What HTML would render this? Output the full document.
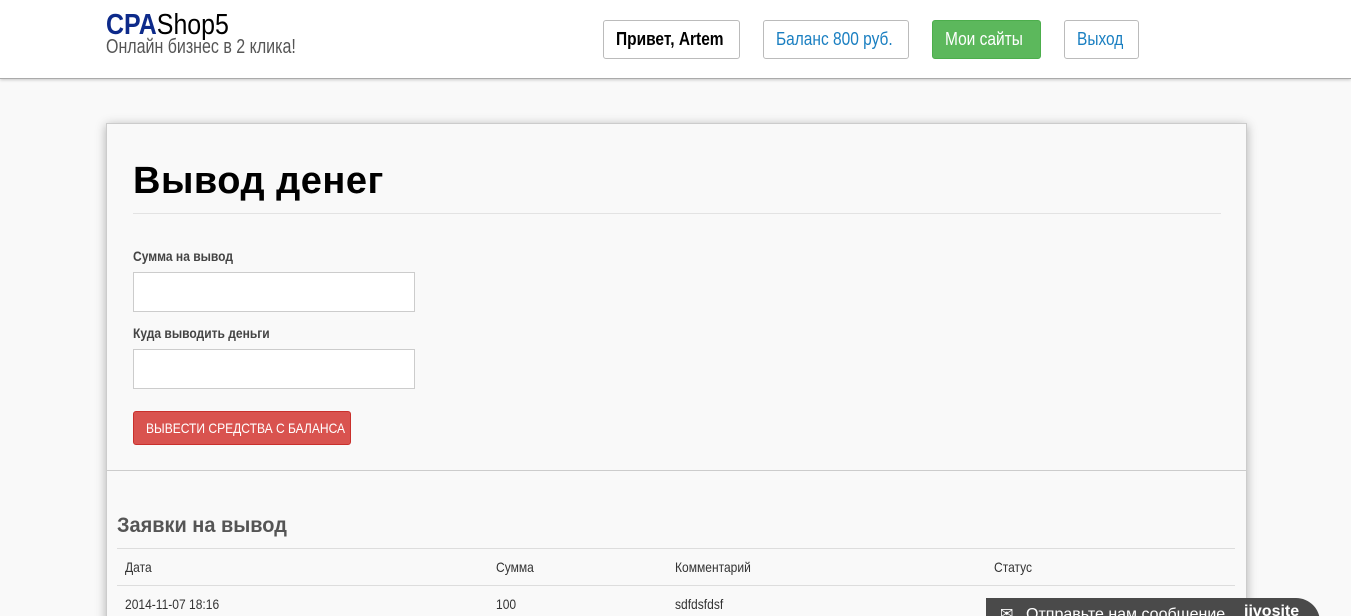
<!DOCTYPE html>
<html><head><meta charset="utf-8"><style>
html,body{margin:0;width:1351px;height:616px;overflow:hidden}
body{background:#f9f9f9;font-family:"Liberation Sans",sans-serif;position:relative}
.c{display:inline-block;transform:scaleX(.86);transform-origin:0 0;white-space:nowrap}
.hdr{position:absolute;left:0;top:0;width:1351px;height:78px;background:#fff;border-bottom:1px solid #aaa;box-shadow:0 1px 3px rgba(0,0,0,.2)}
.logo{position:absolute;left:106px;top:10px;font-size:29px;line-height:30px}
.logo b{color:#0d2a8a}
.sub{position:absolute;left:106px;top:36px;font-size:20px;color:#555}
.btn{position:absolute;top:20px;height:39px;border:1px solid #bbb;border-radius:3px;background:#fff;font-size:18px;line-height:37px;box-sizing:border-box;overflow:hidden}
.btn .c{position:absolute;left:12px;top:0}
.card{position:absolute;left:106px;top:123px;width:1139px;height:520px;background:#f9f9f9;border:1px solid #ccc;box-shadow:0 2px 10px rgba(0,0,0,.3)}
h1{position:absolute;left:26px;top:36px;margin:0;font-weight:bold;font-size:38px;color:#000;letter-spacing:.5px}
.hr{position:absolute;left:26px;right:25px;top:89px;border-top:1px solid #e3e3e3}
.lbl{position:absolute;left:26px;font-size:14px;font-weight:bold;color:#444}
.inp{position:absolute;left:26px;width:282px;height:40px;border:1px solid #ccc;background:#fff;box-sizing:border-box}
.red{position:absolute;left:26px;top:287px;width:218px;height:34px;background:#d9534f;border:1px solid #c9302c;border-radius:3px;color:#fff;font-size:14px;line-height:32px;box-sizing:border-box}
.red .c{position:absolute;left:12px;top:0}
.sep{position:absolute;left:0;right:0;top:346px;border-top:1px solid #ccc}
h3{position:absolute;left:10px;top:390px;margin:0;font-weight:bold;font-size:21px;color:#555}
.row{position:absolute;left:10px;width:1118px;height:37px;border-top:1px solid #ddd;font-size:14px;color:#333}
.row span{position:absolute;top:10px;transform:scaleX(.86);transform-origin:0 0;white-space:nowrap}
.chat{position:absolute;left:986px;top:598px;width:334px;height:30px;background:#4a4a4a;border-radius:0 24px 0 0;color:#fff;font-size:16px}
</style></head><body>
<div class="hdr">
<div class="logo"><span class="c"><b>CPA</b>Shop5</span></div>
<div class="sub"><span class="c" style="transform:scaleX(.8)">Онлайн бизнес в 2 клика!</span></div>
<div class="btn" style="left:603px;width:137px;font-weight:bold"><span class="c">Привет, Artem</span></div>
<div class="btn" style="left:763px;width:146px;color:#1a7fc1"><span class="c">Баланс 800 руб.</span></div>
<div class="btn" style="left:932px;width:109px;background:#5cb85c;border-color:#4cae4c;color:#fff"><span class="c">Мои сайты</span></div>
<div class="btn" style="left:1064px;width:75px;color:#1a7fc1"><span class="c">Выход</span></div>
</div>
<div class="card">
<h1>Вывод денег</h1>
<div class="hr"></div>
<div class="lbl" style="top:124px"><span class="c">Сумма на вывод</span></div>
<div class="inp" style="top:148px"></div>
<div class="lbl" style="top:201px"><span class="c">Куда выводить деньги</span></div>
<div class="inp" style="top:225px"></div>
<div class="red"><span class="c">ВЫВЕСТИ СРЕДСТВА С БАЛАНСА</span></div>
<div class="sep"></div>
<h3><span class="c" style="transform:scaleX(.95)">Заявки на вывод</span></h3>
<div class="row" style="top:424px"><span style="left:8px">Дата</span><span style="left:379px">Сумма</span><span style="left:558px">Комментарий</span><span style="left:877px">Статус</span></div>
<div class="row" style="top:461px"><span style="left:8px">2014-11-07 18:16</span><span style="left:379px">100</span><span style="left:558px">sdfdsfdsf</span></div>
</div>
<div class="chat"><span style="position:absolute;left:14px;top:6px">✉</span><span style="position:absolute;left:40px;top:8px">Отправьте нам сообщение</span><span style="position:absolute;left:258px;top:5px;font-weight:bold">jivosite</span></div>
</body></html>
